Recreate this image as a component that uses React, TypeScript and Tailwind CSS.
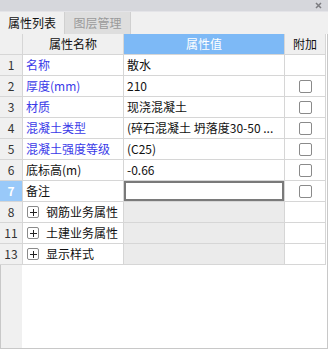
import React from "react";

type Row = {
  n: string;
  name: string;
  value?: string;
  blue?: boolean;
  check?: boolean;
  group?: boolean;
  active?: boolean;
};

const rows: Row[] = [
  { n: "1", name: "名称", value: "散水", blue: true },
  { n: "2", name: "厚度(mm)", value: "210", blue: true, check: true },
  { n: "3", name: "材质", value: "现浇混凝土", blue: true, check: true },
  { n: "4", name: "混凝土类型", value: "(碎石混凝土 坍落度30-50 ...", blue: true, check: true },
  { n: "5", name: "混凝土强度等级", value: "(C25)", blue: true, check: true },
  { n: "6", name: "底标高(m)", value: "-0.66", check: true },
  { n: "7", name: "备注", value: "", check: true, active: true },
  { n: "8", name: "钢筋业务属性", group: true },
  { n: "11", name: "土建业务属性", group: true },
  { n: "13", name: "显示样式", group: true },
];

function Check() {
  return <div className="w-[13px] h-[13px] border border-[#8a8a8a] rounded-[2px] bg-white" />;
}

function Plus() {
  return (
    <div className="w-[12px] h-[12px] border border-[#8a8a8a] rounded-[2px] flex items-center justify-center">
      <svg width="7" height="7" viewBox="0 0 7 7">
        <path d="M0 3.5H7M3.5 0V7" stroke="#222" strokeWidth="1" />
      </svg>
    </div>
  );
}

export default function App() {
  return (
    <div
      className="w-[328px] h-[349px] bg-[#f0f0f0] flex flex-col text-[12px] text-[#111] overflow-hidden"
      style={{ fontFamily: '"Microsoft YaHei", "Noto Sans CJK SC", "Noto Sans", sans-serif' }}
    >
      {/* title bar */}
      <div className="h-[11px] bg-[#d6d7dc] flex items-center justify-end pr-[6px]">
        <svg width="7" height="7" viewBox="0 0 7 7">
          <path d="M1 1L6 6M6 1L1 6" stroke="#7c7c80" strokeWidth="1.5" />
        </svg>
      </div>
      {/* tabs */}
      <div className="h-[23px] flex bg-[#f0f0f0] border-t border-[#e4e4e8]">
        <div className="w-[65px] flex items-center justify-center border-r border-[#d0d0d0] text-[#111]">
          属性列表
        </div>
        <div className="w-[66px] flex items-center justify-center bg-[#dedede] border-r border-[#d0d0d0] text-[#9a9a9a]">
          图层管理
        </div>
      </div>
      {/* table */}
      <div className="flex-1 flex flex-col bg-white border-r border-b border-[#c8c8c8] w-[328px]">
        {/* header */}
        <div className="flex h-[21px] bg-[#f0f0f0] w-[326px] border-b border-[#d6d6d6]">
          <div className="w-[23px] border-r border-[#d6d6d6]" />
          <div className="w-[101px] border-r border-[#d6d6d6] flex items-center justify-center">属性名称</div>
          <div className="w-[161px] border-r border-[#d6d6d6] bg-[#7db9f6] text-white flex items-center justify-center">
            属性值
          </div>
          <div className="w-[41px] border-r border-[#d6d6d6] flex items-center justify-center">附加</div>
        </div>
        {rows.map((r) => (
          <div key={r.n} className="flex h-[21px] w-[326px] border-b border-[#d6d6d6]">
            <div
              className={
                r.active
                  ? "w-[23px] border-r border-[#d6d6d6] bg-[#99c9f9] text-white font-bold flex items-center justify-center"
                  : "w-[23px] border-r border-[#d6d6d6] bg-[#f0f0f0] text-[#333] flex items-center justify-center"
              }
            >
              {r.n}
            </div>
            <div
              className={
                "w-[101px] border-r border-[#d6d6d6] flex items-center pl-[3px] whitespace-nowrap overflow-hidden " +
                (r.blue ? "text-[#3a3ae8]" : "text-[#111]")
              }
            >
              {r.group ? (
                <div className="flex items-center gap-[7px] pl-[1px]">
                  <Plus />
                  <span>{r.name}</span>
                </div>
              ) : (
                r.name
              )}
            </div>
            {r.active ? (
              <div className="w-[161px] border-r border-[#d6d6d6] p-0">
                <div className="w-[160px] h-[20px] border-2 border-[#7a7a7a] bg-white" />
              </div>
            ) : (
              <div
                className={
                  "w-[161px] border-r border-[#d6d6d6] flex items-center pl-[3px] whitespace-nowrap overflow-hidden " +
                  (r.group ? "bg-[#ebebeb]" : "")
                }
              >
                {r.value}
              </div>
            )}
            <div className="w-[41px] border-r border-[#d6d6d6] flex items-center justify-center">
              {r.check ? <Check /> : null}
            </div>
          </div>
        ))}
        <div className="flex-1 flex">
          <div className="w-[22px] bg-[#f0f0f0] border-l border-[#c8c8c8]" />
        </div>
      </div>
    </div>
  );
}
